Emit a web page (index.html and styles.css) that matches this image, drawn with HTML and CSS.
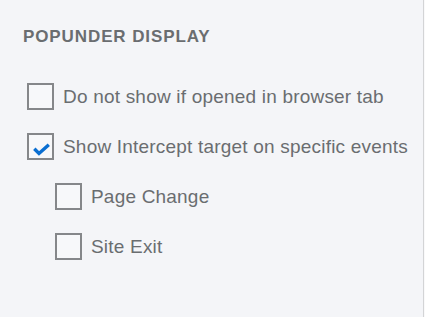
FILE: index.html
```html
<!DOCTYPE html>
<html>
<head>
<meta charset="utf-8">
<link rel="stylesheet" href="styles.css">
</head>
<body>
<div class="panel">
  <h2 class="title">POPUNDER DISPLAY</h2>
  <ul class="options">
    <li class="opt"><span class="box"></span><span class="label">Do not show if opened in browser tab</span></li>
    <li class="opt"><span class="box checked"><svg viewBox="0 0 27 27" width="27" height="27"><path d="M7.3 15.8 L12 20.5 L21.8 11.8" fill="none" stroke="#0a6ed1" stroke-width="3.4" stroke-linecap="butt" stroke-linejoin="miter"/></svg></span><span class="label">Show Intercept target on specific events</span></li>
    <li class="opt sub"><span class="box"></span><span class="label">Page Change</span></li>
    <li class="opt sub"><span class="box"></span><span class="label">Site Exit</span></li>
  </ul>
</div>
</body>
</html>
```
FILE: styles.css
```css
html, body {
  margin: 0;
  padding: 0;
  background: #f9f9fa;
}
.panel {
  box-sizing: border-box;
  width: 424px;
  height: 317px;
  background: #f4f5f8;
  border-right: 1px solid #d3d4d6;
  padding: 27px 0 0 23px;
  font-family: "Liberation Sans", Arial, sans-serif;
  color: #6a6d70;
}
.title {
  margin: 0;
  font-size: 17px;
  line-height: 20px;
  font-weight: bold;
  letter-spacing: 0.9px;
  color: #6a6d70;
}
.options {
  list-style: none;
  margin: 36px 0 0 4px;
  padding: 0;
  display: flex;
  flex-direction: column;
  gap: 23px;
}
.opt {
  display: flex;
  align-items: center;
  height: 27px;
}
.opt.sub {
  margin-left: 28px;
}
.box {
  box-sizing: border-box;
  width: 27px;
  height: 27px;
  flex: none;
  border: 2px solid #85878a;
  background: #f7f8fa;
  position: relative;
}
.box svg {
  position: absolute;
  left: -2px;
  top: -2px;
}
.label {
  margin-left: 9px;
  font-size: 19px;
  letter-spacing: 0.2px;
  line-height: 27px;
  color: #6a6d70;
}
```
